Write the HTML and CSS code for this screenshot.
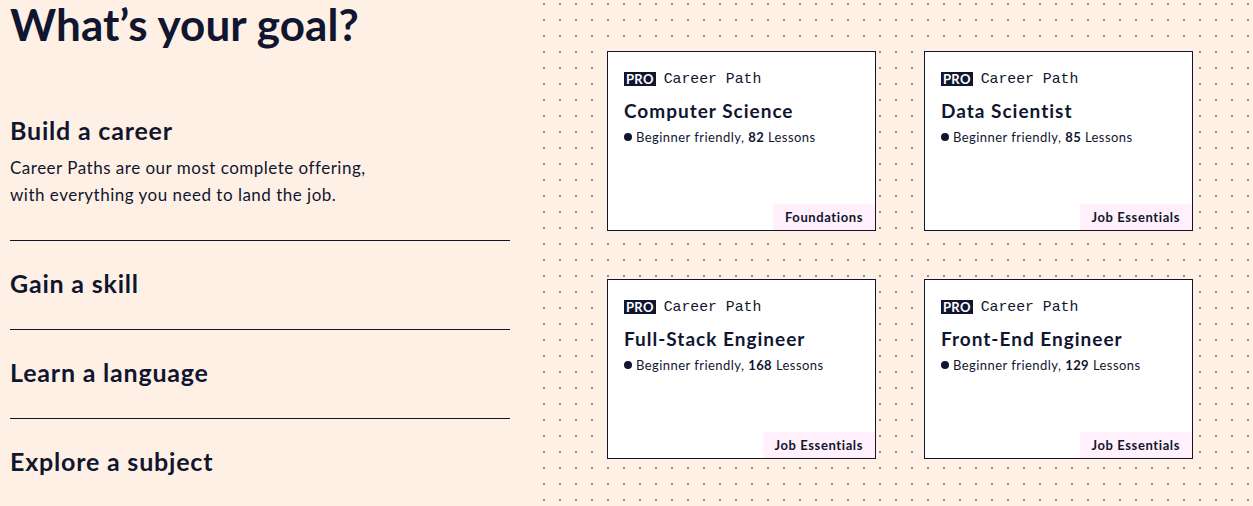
FILE: index.html
```html
<!DOCTYPE html>
<html lang="en">
<head>
<meta charset="utf-8">
<title>What’s your goal?</title>
<link rel="stylesheet" href="styles.css">
</head>
<body>
<div class="page">
  <section class="goals">
    <h1 class="goals-title">What’s your goal?</h1>
    <ul class="goal-list">
      <li class="goal goal-active">
        <h2 class="goal-name">Build a career</h2>
        <p class="goal-desc">Career Paths are our most complete offering,<br>with everything you need to land the job.</p>
      </li>
      <li class="goal"><h2 class="goal-name">Gain a skill</h2></li>
      <li class="goal"><h2 class="goal-name">Learn a language</h2></li>
      <li class="goal"><h2 class="goal-name">Explore a subject</h2></li>
    </ul>
  </section>
  <section class="paths">
    <div class="path-grid">
      <article class="card">
        <div class="eyebrow"><span class="pro">PRO</span><span class="kind">Career Path</span></div>
        <h3 class="card-title">Computer Science</h3>
        <p class="meta"><span class="dot"></span>Beginner friendly, <b>82</b> Lessons</p>
        <span class="tag">Foundations</span>
      </article>
      <article class="card">
        <div class="eyebrow"><span class="pro">PRO</span><span class="kind">Career Path</span></div>
        <h3 class="card-title">Data Scientist</h3>
        <p class="meta"><span class="dot"></span>Beginner friendly, <b>85</b> Lessons</p>
        <span class="tag">Job Essentials</span>
      </article>
      <article class="card">
        <div class="eyebrow"><span class="pro">PRO</span><span class="kind">Career Path</span></div>
        <h3 class="card-title">Full-Stack Engineer</h3>
        <p class="meta"><span class="dot"></span>Beginner friendly, <b>168</b> Lessons</p>
        <span class="tag">Job Essentials</span>
      </article>
      <article class="card">
        <div class="eyebrow"><span class="pro">PRO</span><span class="kind">Career Path</span></div>
        <h3 class="card-title">Front-End Engineer</h3>
        <p class="meta"><span class="dot"></span>Beginner friendly, <b>129</b> Lessons</p>
        <span class="tag">Job Essentials</span>
      </article>
    </div>
  </section>
</div>
</body>
</html>
```

FILE: styles.css
```css
* { box-sizing: border-box; }

html, body {
  margin: 0;
  padding: 0;
}

body {
  background: #fff0e5;
  color: #10162f;
  font-family: Lato, "Noto Sans", sans-serif;
}

.page {
  display: flex;
  height: 506px;
  overflow: hidden;
}

.goals {
  flex: none;
  width: 510px;
  padding-left: 10px;
  margin-right: 26px;
}

.goals-title {
  margin: 0 0 40px;
  font-size: 44px;
  line-height: 48px;
  font-weight: 700;
  letter-spacing: 0.1px;
}

.goal-list {
  list-style: none;
  margin: 0;
  padding: 0;
}

.goal {
  padding: 26px 0 30px;
  border-bottom: 1px solid #10162f;
}

.goal:last-child {
  border-bottom: none;
}

.goal-name {
  margin: 0;
  font-size: 25px;
  line-height: 32px;
  font-weight: 700;
  letter-spacing: 0.8px;
}

.goal-desc {
  margin: 8px 0 2px;
  font-size: 17px;
  line-height: 27px;
  letter-spacing: 0.5px;
}

.paths {
  flex: 1;
  padding: 51px 0 0 71px;
  background-image: radial-gradient(circle, #8a8a8a 1px, transparent 1.4px);
  background-size: 16px 16px;
  background-position: 0 -4px;
}

.path-grid {
  display: grid;
  grid-template-columns: repeat(2, 269px);
  grid-auto-rows: 180px;
  gap: 48px;
}

.card {
  display: flex;
  flex-direction: column;
  background: #fff;
  border: 1px solid #10162f;
  padding: 18px 0 0 16px;
}

.eyebrow {
  display: flex;
  align-items: center;
  gap: 8px;
  height: 18px;
}

.pro {
  background: #10162f;
  color: #fff;
  font-weight: 700;
  font-size: 13px;
  line-height: 14px;
  padding: 0 2px;
  letter-spacing: 0.3px;
}

.kind {
  font-family: "Liberation Mono", "DejaVu Sans Mono", monospace;
  font-size: 14.8px;
  line-height: 18px;
}

.card-title {
  margin: 11px 0 0;
  font-size: 19px;
  line-height: 24px;
  font-weight: 700;
  letter-spacing: 1px;
}

.meta {
  display: flex;
  align-items: center;
  margin: 5px 0 0;
  font-size: 13px;
  line-height: 18px;
  letter-spacing: 0.45px;
  white-space: pre;
}

.meta b {
  font-weight: 700;
}

.dot {
  width: 8px;
  height: 8px;
  border-radius: 50%;
  background: #10162f;
  margin-right: 4px;
}

.tag {
  margin-top: auto;
  align-self: flex-end;
  background: #fff0fb;
  font-size: 13px;
  font-weight: 700;
  line-height: 26px;
  padding: 0 12px;
  letter-spacing: 0.6px;
}
```
